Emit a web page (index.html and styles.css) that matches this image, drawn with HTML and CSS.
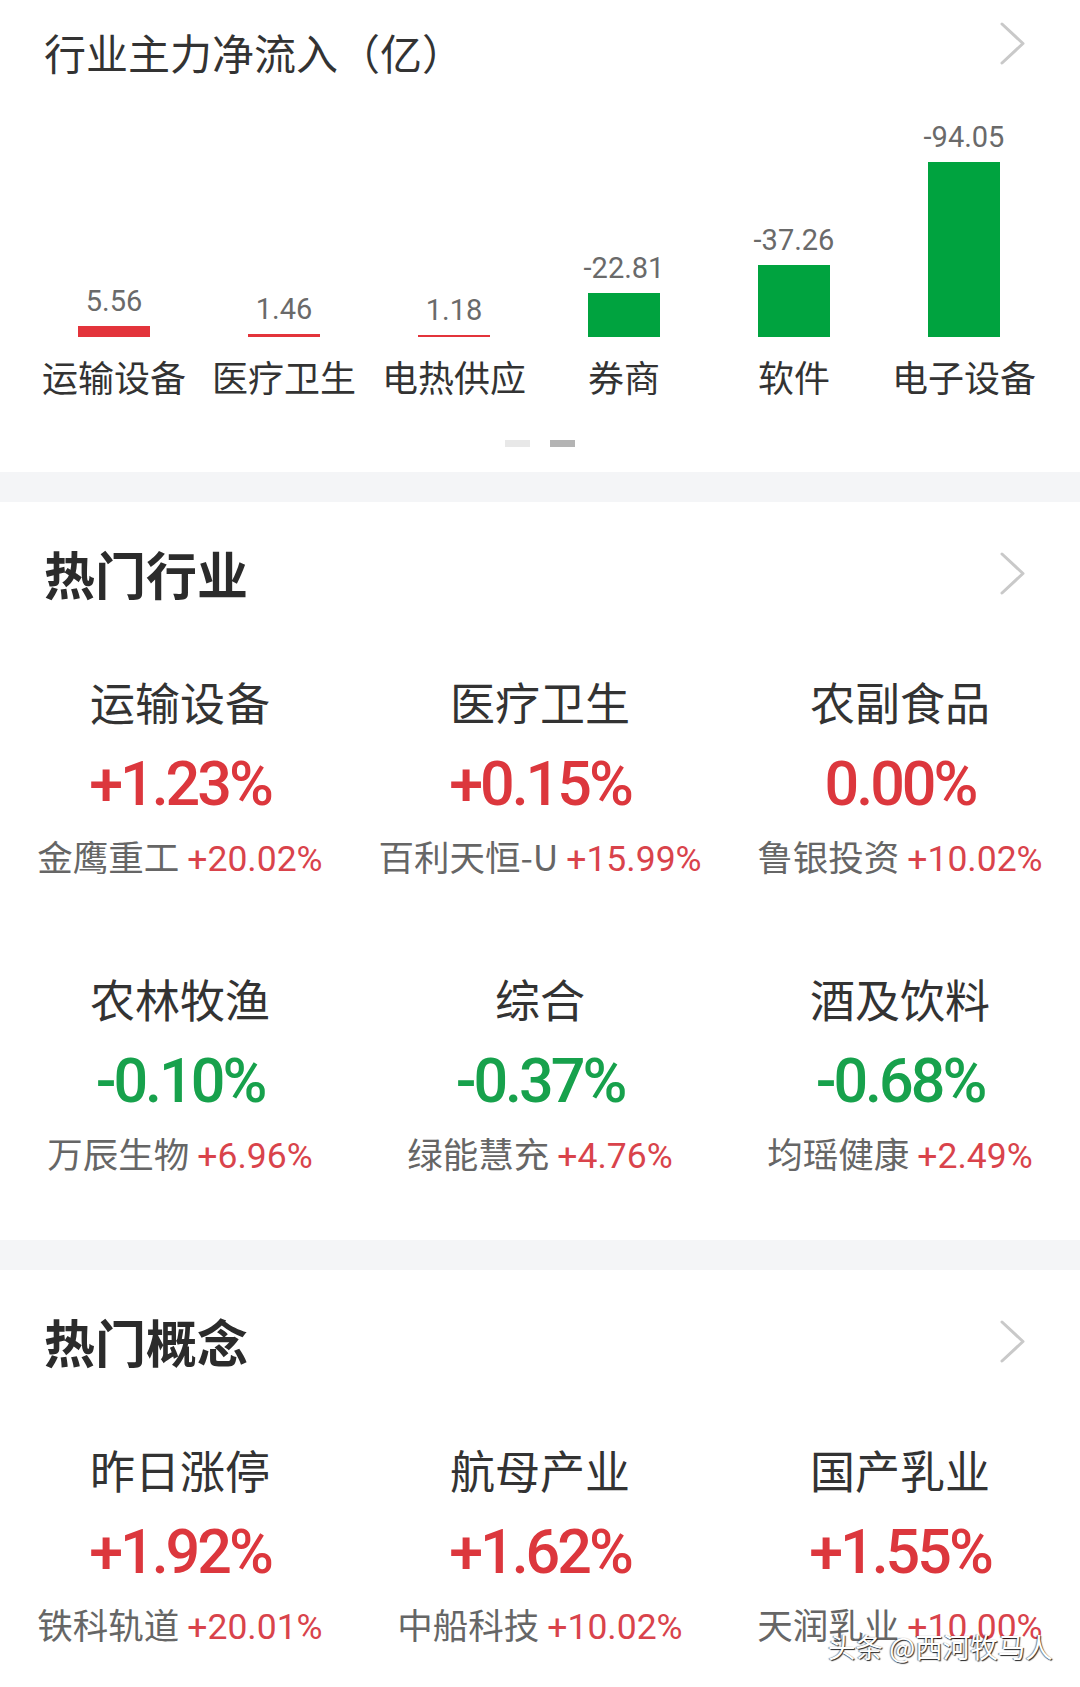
FILE: index.html
```html
<!DOCTYPE html>
<html lang="zh-CN">
<head>
  <meta charset="UTF-8">
  <title>行业资金</title>
  <link rel="stylesheet" href="styles.css">
</head>
<body>
  <section class="flow">
    <div class="flow-head">
      <h2 class="flow-title">行业主力净流入（亿）</h2>
      <svg class="chevron" viewBox="0 0 26 43"><polyline points="2,2 23,21.5 2,41"/></svg>
    </div>

    <div class="chart">
      <div class="col">
        <div class="bar-area">
          <span class="val">5.56</span>
          <span class="bar up" style="height:10.7px"></span>
        </div>
        <span class="col-name">运输设备</span>
      </div>
      <div class="col">
        <div class="bar-area">
          <span class="val">1.46</span>
          <span class="bar up" style="height:2.8px"></span>
        </div>
        <span class="col-name">医疗卫生</span>
      </div>
      <div class="col">
        <div class="bar-area">
          <span class="val">1.18</span>
          <span class="bar up" style="height:2.3px"></span>
        </div>
        <span class="col-name">电热供应</span>
      </div>
      <div class="col">
        <div class="bar-area">
          <span class="val">-22.81</span>
          <span class="bar down" style="height:44px"></span>
        </div>
        <span class="col-name">券商</span>
      </div>
      <div class="col">
        <div class="bar-area">
          <span class="val">-37.26</span>
          <span class="bar down" style="height:72px"></span>
        </div>
        <span class="col-name">软件</span>
      </div>
      <div class="col">
        <div class="bar-area">
          <span class="val">-94.05</span>
          <span class="bar down" style="height:175px"></span>
        </div>
        <span class="col-name">电子设备</span>
      </div>
    </div>

    <div class="dots"><i class="dot"></i><i class="dot on"></i></div>
  </section>

  <div class="gap"></div>

  <section class="hot">
    <div class="hot-head">
      <h2 class="hot-title">热门行业</h2>
      <svg class="chevron" viewBox="0 0 26 43"><polyline points="2,2 23,21.5 2,41"/></svg>
    </div>
    <div class="hot-grid">
      <div class="cell">
        <div class="cell-name">运输设备</div>
        <div class="cell-pct up">+1.23%</div>
        <div class="cell-sub">金鹰重工 <span class="num">+20.02%</span></div>
      </div>
      <div class="cell">
        <div class="cell-name">医疗卫生</div>
        <div class="cell-pct up">+0.15%</div>
        <div class="cell-sub">百利天恒-U <span class="num">+15.99%</span></div>
      </div>
      <div class="cell">
        <div class="cell-name">农副食品</div>
        <div class="cell-pct up">0.00%</div>
        <div class="cell-sub">鲁银投资 <span class="num">+10.02%</span></div>
      </div>
      <div class="cell">
        <div class="cell-name">农林牧渔</div>
        <div class="cell-pct down">-0.10%</div>
        <div class="cell-sub">万辰生物 <span class="num">+6.96%</span></div>
      </div>
      <div class="cell">
        <div class="cell-name">综合</div>
        <div class="cell-pct down">-0.37%</div>
        <div class="cell-sub">绿能慧充 <span class="num">+4.76%</span></div>
      </div>
      <div class="cell">
        <div class="cell-name">酒及饮料</div>
        <div class="cell-pct down">-0.68%</div>
        <div class="cell-sub">均瑶健康 <span class="num">+2.49%</span></div>
      </div>
    </div>
  </section>

  <div class="gap"></div>

  <section class="hot">
    <div class="hot-head">
      <h2 class="hot-title">热门概念</h2>
      <svg class="chevron" viewBox="0 0 26 43"><polyline points="2,2 23,21.5 2,41"/></svg>
    </div>
    <div class="hot-grid">
      <div class="cell">
        <div class="cell-name">昨日涨停</div>
        <div class="cell-pct up">+1.92%</div>
        <div class="cell-sub">铁科轨道 <span class="num">+20.01%</span></div>
      </div>
      <div class="cell">
        <div class="cell-name">航母产业</div>
        <div class="cell-pct up">+1.62%</div>
        <div class="cell-sub">中船科技 <span class="num">+10.02%</span></div>
      </div>
      <div class="cell">
        <div class="cell-name">国产乳业</div>
        <div class="cell-pct up">+1.55%</div>
        <div class="cell-sub">天润乳业 <span class="num">+10.00%</span></div>
      </div>
    </div>
  </section>

  <div class="mark">头条 @西河牧马人</div>
</body>
</html>
```

FILE: styles.css
```css
* {
  box-sizing: border-box;
}
body {
  position: relative;
  margin: 0;
  height: 1687px;
  overflow: hidden;
  background: #fff;
  color: #333;
  font-family: "Noto Sans CJK SC", "Noto Sans", sans-serif;
}
h2 {
  margin: 0;
  font-weight: normal;
}
.num, .val, .cell-pct {
  font-family: Roboto, "Noto Sans CJK SC", sans-serif;
}
.chevron {
  display: block;
  width: 26px;
  height: 43px;
  fill: none;
  stroke: #c9c9c9;
  stroke-width: 3;
  stroke-linecap: round;
  stroke-linejoin: round;
}

/* net inflow chart */
.flow {
  padding: 22px 0 25px;
}
.flow-head {
  display: flex;
  justify-content: space-between;
  align-items: flex-start;
  padding: 0 54px 0 44px;
}
.flow-title {
  margin-top: 9px;
  font-size: 42px;
  line-height: 42px;
  color: #333;
}
.chart {
  display: flex;
  padding-left: 29px;
}
.col {
  width: 170px;
  display: flex;
  flex-direction: column;
  align-items: center;
}
.bar-area {
  height: 264px;
  display: flex;
  flex-direction: column;
  justify-content: flex-end;
  align-items: center;
}
.val {
  margin-bottom: 10px;
  font-size: 29px;
  line-height: 29px;
  color: #6a6a6a;
}
.bar {
  width: 72px;
}
.bar.up {
  background: #e3343b;
}
.bar.down {
  background: #00a33f;
}
.col-name {
  margin-top: 21px;
  font-size: 36px;
  line-height: 36px;
  white-space: nowrap;
}
.dots {
  display: flex;
  justify-content: center;
  gap: 20px;
  margin-top: 46px;
}
.dot {
  width: 25px;
  height: 7px;
  background: #e8e8e8;
}
.dot.on {
  background: #b4b4b4;
}

.gap {
  height: 30px;
  background: #f4f5f7;
}

/* hot lists */
.hot {
  padding: 46px 0 69px;
}
.hot-head {
  display: flex;
  justify-content: space-between;
  align-items: center;
  padding: 0 54px 0 44px;
}
.hot-title {
  font-size: 51px;
  line-height: 51px;
  font-weight: 700;
  color: #2b2b2b;
}
.hot-grid {
  display: grid;
  grid-template-columns: repeat(3, 1fr);
  row-gap: 102px;
  margin-top: 80px;
}
.cell {
  text-align: center;
}
.cell-name {
  font-size: 45px;
  line-height: 45px;
}
.cell-pct {
  margin-top: 30px;
  font-size: 61px;
  line-height: 61px;
  font-weight: 500;
  letter-spacing: -3px;
}
.cell-pct.up {
  color: #dc373d;
}
.cell-pct.down {
  color: #17a14c;
}
.cell-sub {
  height: 36px;
  margin-top: 23px;
  font-size: 35.5px;
  line-height: 36px;
  color: #666;
  white-space: nowrap;
}
.cell-sub .num {
  color: #d9434b;
}

.mark {
  position: absolute;
  left: 828px;
  top: 1630px;
  font-size: 27.5px;
  line-height: 32px;
  color: #fff;
  text-shadow: 1px 1px 1px rgba(0, 0, 0, 0.85), -1px 0 1px rgba(0, 0, 0, 0.5);
}
```
